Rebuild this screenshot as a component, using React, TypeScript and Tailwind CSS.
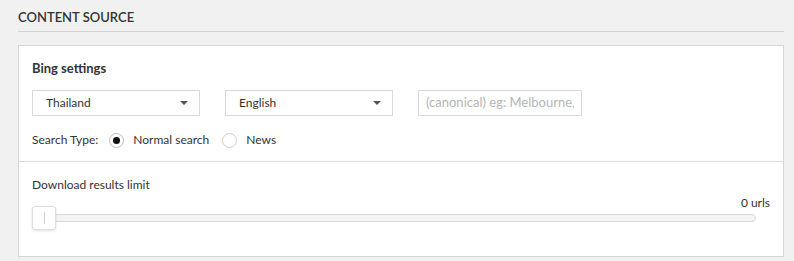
export default function App() {
  return (
    <div
      className="w-[794px] h-[261px] bg-[#f1f1f1] pl-[18px] pr-[10px] pt-[9px] text-[#333]"
      style={{ fontFamily: "Lato, 'Open Sans', sans-serif" }}
    >
      {/* Section header */}
      <h2 className="text-[13px] font-semibold uppercase leading-[16px] pb-[6px] border-b border-[#d4d4d4] text-[#333]">
        Content Source
      </h2>

      <div className="mt-[13px] bg-white border border-[#d6d6d6]">
        {/* Bing settings */}
        <div className="px-[13px] pt-[14px] pb-[13px]">
          <h3 className="text-[13px] font-bold leading-[16px] text-[#333]">Bing settings</h3>

          <div className="mt-[14px] flex items-center gap-[25px]">
            <div className="w-[168px] h-[26px] border border-[#d9d9d9] flex items-center justify-between pl-[13px] pr-[11px] text-[12px]">
              <span>Thailand</span>
              <span className="w-0 h-0 border-l-[4px] border-r-[4px] border-t-[4px] border-l-transparent border-r-transparent border-t-[#555]" />
            </div>
            <div className="w-[168px] h-[26px] border border-[#d9d9d9] flex items-center justify-between pl-[13px] pr-[11px] text-[12px]">
              <span>English</span>
              <span className="w-0 h-0 border-l-[4px] border-r-[4px] border-t-[4px] border-l-transparent border-r-transparent border-t-[#555]" />
            </div>
            <div className="w-[164px] h-[26px] border border-[#d9d9d9] flex items-center px-[7px]">
              <span className="block w-full overflow-hidden whitespace-nowrap text-[13px] text-[#b5b5b5]">
                (canonical) eg: Melbourne, Victoria
              </span>
            </div>
          </div>

          <div className="mt-[16px] flex items-center text-[12px] leading-[16px]">
            <span>Search Type:</span>
            <span className="ml-[11px] w-[15px] h-[15px] rounded-full border border-[#bdbdbd] flex items-center justify-center">
              <span className="w-[7px] h-[7px] rounded-full bg-[#111]" />
            </span>
            <span className="ml-[9px] text-[#333]">Normal search</span>
            <span className="ml-[13px] w-[15px] h-[15px] rounded-full border border-[#cfcfcf]" />
            <span className="ml-[9px]">News</span>
          </div>
        </div>

        {/* Download limit */}
        <div className="border-t border-[#dcdcdc] px-[13px] pt-[15px] pb-[26px]">
          <div className="text-[12px] leading-[16px]">Download results limit</div>
          <div className="text-right text-[12px] leading-[12px] mt-[4px]">0 urls</div>
          <div className="mt-[-3px] flex items-center pr-[14px]">
            <div className="relative flex-1 h-[24px] flex items-center">
              <div className="ml-[10px] flex-1 h-[8px] rounded-full border border-[#d9d9d9] bg-[#f4f4f4]" />
              <div className="absolute left-0 top-0 w-[24px] h-[24px] rounded-[3px] border border-[#dedede] bg-white shadow-[0_1px_3px_rgba(0,0,0,0.12)] flex items-center justify-center">
                <span className="w-[1px] h-[12px] bg-[#cfcfcf]" />
              </div>
            </div>
          </div>
        </div>
      </div>
    </div>
  )
}
